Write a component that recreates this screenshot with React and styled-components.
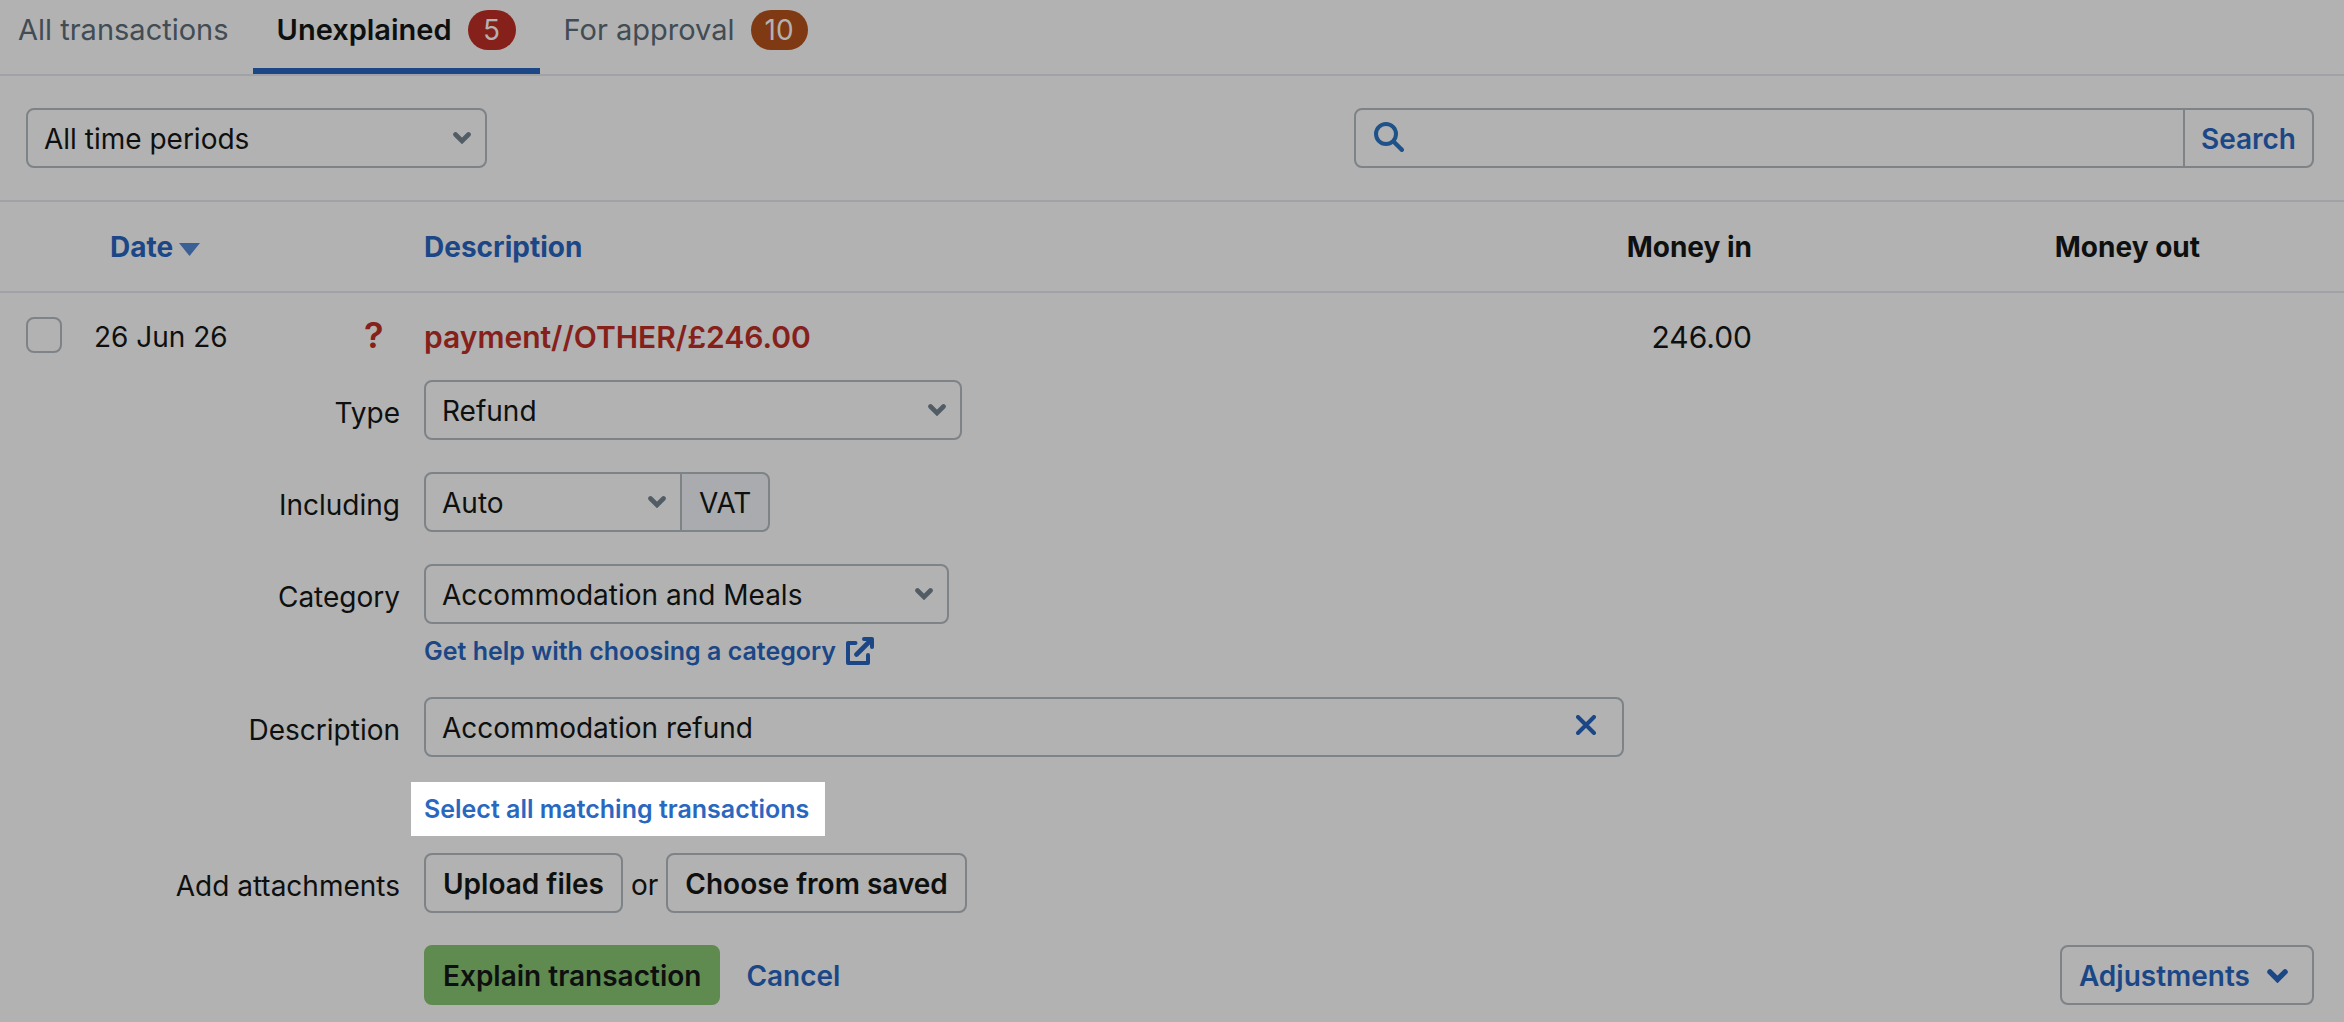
import React from 'react';
import styled, { createGlobalStyle, css } from 'styled-components';

const c = {
  page: '#b2b2b2',
  ink: '#0e100f',
  muted: '#414c54',
  blue: '#1c4787',
  link: '#2a68bf',
  line: '#a1a1a8',
  border: '#7d8386',
  red: '#86201b',
  orange: '#803a13',
  green: '#5f8b50',
  addon: '#a9abae',
};

const Global = createGlobalStyle`
  *, *::before, *::after { box-sizing: border-box; }
  body {
    margin: 0;
    background: ${c.page};
    color: ${c.ink};
    font: 400 28px/36px Inter, "Liberation Sans", sans-serif;
  }
  button, input, select { font: inherit; color: inherit; margin: 0; }
  a { text-decoration: none; }
`;

const box = css`
  height: 60px;
  border: 2px solid ${c.border};
  border-radius: 8px;
  background: transparent;
`;

const Tabs = styled.nav`
  display: flex;
  height: 76px;
  border-bottom: 2px solid ${c.line};
  padding-right: 24px;
  margin-left: -6px;
`;

const Tab = styled.a`
  display: flex;
  align-items: center;
  gap: 16px;
  padding: 0 24px 8px;
  border-bottom: 6px solid ${(p) => (p.$active ? c.blue : 'transparent')};
  color: ${(p) => (p.$active ? c.ink : c.muted)};
  font-size: 29px;
  font-weight: ${(p) => (p.$active ? 600 : 400)};
  white-space: nowrap;
`;

const Badge = styled.span`
  height: 40px;
  min-width: 48px;
  padding: 0 14px;
  border-radius: 20px;
  background: ${(p) => p.$color};
  color: ${c.page};
  font-size: 28px;
  font-weight: 400;
  line-height: 40px;
  text-align: center;
`;

const Toolbar = styled.form`
  display: flex;
  justify-content: space-between;
  gap: 32px;
  padding: 32px 30px 32px 26px;
  border-bottom: 2px solid ${c.line};
`;

const SelectBox = styled.div`
  position: relative;
  width: ${(p) => p.$width}px;
  max-width: 100%;

  svg {
    position: absolute;
    right: 16px;
    top: 24px;
    pointer-events: none;
  }
`;

const NativeSelect = styled.select`
  ${box}
  width: 100%;
  padding: 2px 48px 0 16px;
  appearance: none;
  ${(p) => p.$joined && 'border-radius: 8px 0 0 8px;'}
`;

const SearchGroup = styled.div`
  ${box}
  display: flex;
  flex: 0 1 960px;
  align-items: stretch;
  color: ${c.blue};

  svg { margin: 12px 0 0 18px; flex: none; }
`;

const SearchInput = styled.input`
  flex: 1;
  min-width: 0;
  border: 0;
  padding: 0 12px;
  background: transparent;
`;

const SearchButton = styled.button`
  border: 0;
  border-left: 2px solid ${c.border};
  padding: 2px 16px 0;
  background: transparent;
  color: ${c.blue};
  font-weight: 600;
`;

const Table = styled.table`
  width: 100%;
  border-collapse: collapse;
  table-layout: fixed;

  td, th { padding: 0; text-align: left; }
`;

const HeadRow = styled.tr`
  height: 90px;
  border-bottom: 2px solid ${c.line};
`;

const Row = styled.tr`
  height: 88px;
`;

const Head = styled.th`
  font-weight: 700;
  && { text-align: ${(p) => (p.$right ? 'right' : 'left')}; }
`;

const Amount = styled.td`
  && { text-align: right; }
  font-size: 30px;
`;

const SortButton = styled.button`
  display: flex;
  align-items: center;
  gap: 6px;
  border: 0;
  padding: 0 0 0 ${(p) => (p.$inset ? 16 : 0)}px;
  background: transparent;
  color: ${c.blue};
  font-weight: 700;
`;

const CheckCell = styled.td`
  && { padding: 0 0 4px 26px; }
`;

const Check = styled.input`
  display: block;
  appearance: none;
  width: 36px;
  height: 36px;
  border: 2px solid ${c.border};
  border-radius: 8px;
`;

const Status = styled.td`
  && { padding: 0 0 4px 20px; }
  color: ${c.red};
  font-size: 36px;
  font-weight: 600;
`;

const Payee = styled.td`
  color: ${c.red};
  font-size: 30px;
  font-weight: 600;
  white-space: nowrap;
`;

const Form = styled.form`
  display: flex;
  flex-direction: column;
  gap: 32px;
  padding: 0 30px 17px 0;
`;

const Field = styled.div`
  display: grid;
  grid-template-columns: 400px minmax(0, 1fr);
  column-gap: 24px;
`;

const Label = styled.label`
  padding-top: 15px;
  text-align: right;
`;

const Group = styled.div`
  display: flex;
  align-items: center;
`;

const Addon = styled.span`
  ${box}
  margin-left: -2px;
  padding: 2px 17px 0;
  border-radius: 0 8px 8px 0;
  background: ${c.addon};
  line-height: 54px;
`;

const HelpLink = styled.a`
  display: flex;
  align-items: center;
  gap: 10px;
  height: 30px;
  margin-top: 12px;
  margin-bottom: -1px;
  color: ${c.blue};
  font-size: 25px;
  font-weight: 600;
`;

const TextBox = styled.div`
  ${box}
  display: flex;
  align-items: center;
  width: 1200px;
  max-width: 100%;
`;

const TextInput = styled.input`
  flex: 1;
  min-width: 0;
  height: 100%;
  border: 0;
  padding: 2px 16px 0;
  background: transparent;
`;

const ClearButton = styled.button`
  display: flex;
  border: 0;
  padding: 0 26px 4px;
  background: transparent;
  color: ${c.blue};
`;

const Highlight = styled.div`
  display: flex;
  align-items: center;
  width: fit-content;
  height: 54px;
  margin: 25px 0 -15px -13px;
  padding: 0 16px 0 13px;
  background: #fff;

  a { color: ${c.link}; font-size: 25px; font-weight: 600; }
`;

const Button = styled.button`
  ${box}
  padding: 2px 17px 0;
  font-weight: 600;
  white-space: nowrap;
  ${(p) => p.$primary && `background: ${c.green}; border-color: ${c.green};`}
  ${(p) => p.$menu && `
    display: flex;
    align-items: center;
    gap: 17px;
    margin-left: auto;
    padding-right: 24px;
    color: ${c.blue};
  `}
`;

const Or = styled.span`
  padding: 4px 8px 0;
`;

const Cancel = styled.a`
  margin-left: 26px;
  padding-top: 2px;
  color: ${c.blue};
  font-weight: 600;
`;

const Chevron = ({ width = 18, height = 12, color = '#525c64' }) => (
  <svg width={width} height={height} viewBox="0 0 18 12" fill="none" aria-hidden="true">
    <path d="M2.5 2.5 9 9l6.5-6.5" stroke={color} strokeWidth="4.6" strokeLinecap="round" />
  </svg>
);

const SearchIcon = () => (
  <svg width="30" height="30" viewBox="0 0 30 30" fill="none" stroke="#1e5288" aria-hidden="true">
    <circle cx="12" cy="12" r="10" strokeWidth="4" />
    <path d="m19.5 19.5 8.3 8.3" strokeWidth="4.4" strokeLinecap="round" />
  </svg>
);

const ExternalIcon = () => (
  <svg width="28" height="28" viewBox="0 0 28 28" fill="none" stroke={c.blue} strokeWidth="4" strokeLinejoin="round" aria-hidden="true">
    <path d="M9.5 6H2v20h20v-8" strokeLinecap="round" />
    <path d="M18 2h8v8" strokeLinecap="round" />
    <path d="M25 3 10.5 17.5" strokeWidth="4.6" strokeLinecap="round" />
  </svg>
);

const CloseIcon = () => (
  <svg width="20" height="20" viewBox="0 0 20 20" fill="none" stroke="currentColor" aria-hidden="true">
    <path d="m2 2 16 16M18 2 2 18" strokeWidth="4" strokeLinecap="round" />
  </svg>
);

const SortArrow = styled.svg`
  margin-top: 6px;
`;

const SortIcon = () => (
  <SortArrow width="21" height="13" viewBox="0 0 21 13" aria-hidden="true">
    <path d="M0 0h21L10.5 13z" fill="#3b6096" />
  </SortArrow>
);

const Col = styled.col`
  width: ${(p) => (p.$width ? `${p.$width}px` : 'auto')};
`;

const Dropdown = ({ id, width, value, joined, ...rest }) => (
  <SelectBox $width={width}>
    <NativeSelect id={id} defaultValue={value} $joined={joined} {...rest}>
      <option>{value}</option>
    </NativeSelect>
    <Chevron />
  </SelectBox>
);

const stop = (e) => e.preventDefault();

export default function App() {
  const [description, setDescription] = React.useState('Accommodation refund');

  return (
    <>
      <Global />
      <Tabs aria-label="Transactions">
        <Tab href="#all">All transactions</Tab>
        <Tab href="#unexplained" $active aria-current="page">
          Unexplained <Badge $color={c.red}>5</Badge>
        </Tab>
        <Tab href="#approval">
          For approval <Badge $color={c.orange}>10</Badge>
        </Tab>
      </Tabs>

      <Toolbar onSubmit={stop}>
        <Dropdown width={461} value="All time periods" aria-label="Time period" />
        <SearchGroup>
          <SearchIcon />
          <SearchInput type="search" aria-label="Search transactions" />
          <SearchButton type="submit">Search</SearchButton>
        </SearchGroup>
      </Toolbar>

      <Table>
        <colgroup>
          <Col $width={94} />
          <Col $width={250} />
          <Col $width={80} />
          <Col />
          <Col $width={300} />
          <Col $width={448} />
          <Col $width={144} />
        </colgroup>
        <thead>
          <HeadRow>
            <td />
            <Head scope="col" aria-sort="descending">
              <SortButton type="button" $inset>Date <SortIcon /></SortButton>
            </Head>
            <td />
            <Head scope="col"><SortButton type="button">Description</SortButton></Head>
            <Head scope="col" $right>Money in</Head>
            <Head scope="col" $right>Money out</Head>
            <td />
          </HeadRow>
        </thead>
        <tbody>
          <Row>
            <CheckCell><Check type="checkbox" aria-label="Select transaction" /></CheckCell>
            <td>26 Jun 26</td>
            <Status>?</Status>
            <Payee>payment//OTHER/£246.00</Payee>
            <Amount>246.00</Amount>
            <Amount />
            <td />
          </Row>
          <tr>
            <td colSpan={7}>
              <Form onSubmit={stop}>
                <Field>
                  <Label htmlFor="type">Type</Label>
                  <Dropdown id="type" width={538} value="Refund" />
                </Field>
                <Field>
                  <Label htmlFor="vat">Including</Label>
                  <Group>
                    <Dropdown id="vat" width={258} value="Auto" joined />
                    <Addon>VAT</Addon>
                  </Group>
                </Field>
                <Field>
                  <Label htmlFor="category">Category</Label>
                  <div>
                    <Dropdown id="category" width={525} value="Accommodation and Meals" />
                    <HelpLink href="#help">Get help with choosing a category <ExternalIcon /></HelpLink>
                  </div>
                </Field>
                <Field>
                  <Label htmlFor="description">Description</Label>
                  <div>
                    <TextBox>
                      <TextInput
                        id="description"
                        type="text"
                        value={description}
                        onChange={(e) => setDescription(e.target.value)}
                      />
                      <ClearButton type="button" aria-label="Clear description" onClick={() => setDescription('')}>
                        <CloseIcon />
                      </ClearButton>
                    </TextBox>
                    <Highlight><a href="#matching">Select all matching transactions</a></Highlight>
                  </div>
                </Field>
                <Field>
                  <Label as="span">Add attachments</Label>
                  <Group>
                    <Button type="button">Upload files</Button>
                    <Or>or</Or>
                    <Button type="button">Choose from saved</Button>
                  </Group>
                </Field>
                <Field>
                  <span />
                  <Group>
                    <Button type="submit" $primary>Explain transaction</Button>
                    <Cancel href="#cancel">Cancel</Cancel>
                    <Button type="button" $menu>
                      Adjustments <Chevron width={21} height={14} color={c.blue} />
                    </Button>
                  </Group>
                </Field>
              </Form>
            </td>
          </tr>
        </tbody>
      </Table>
    </>
  );
}
